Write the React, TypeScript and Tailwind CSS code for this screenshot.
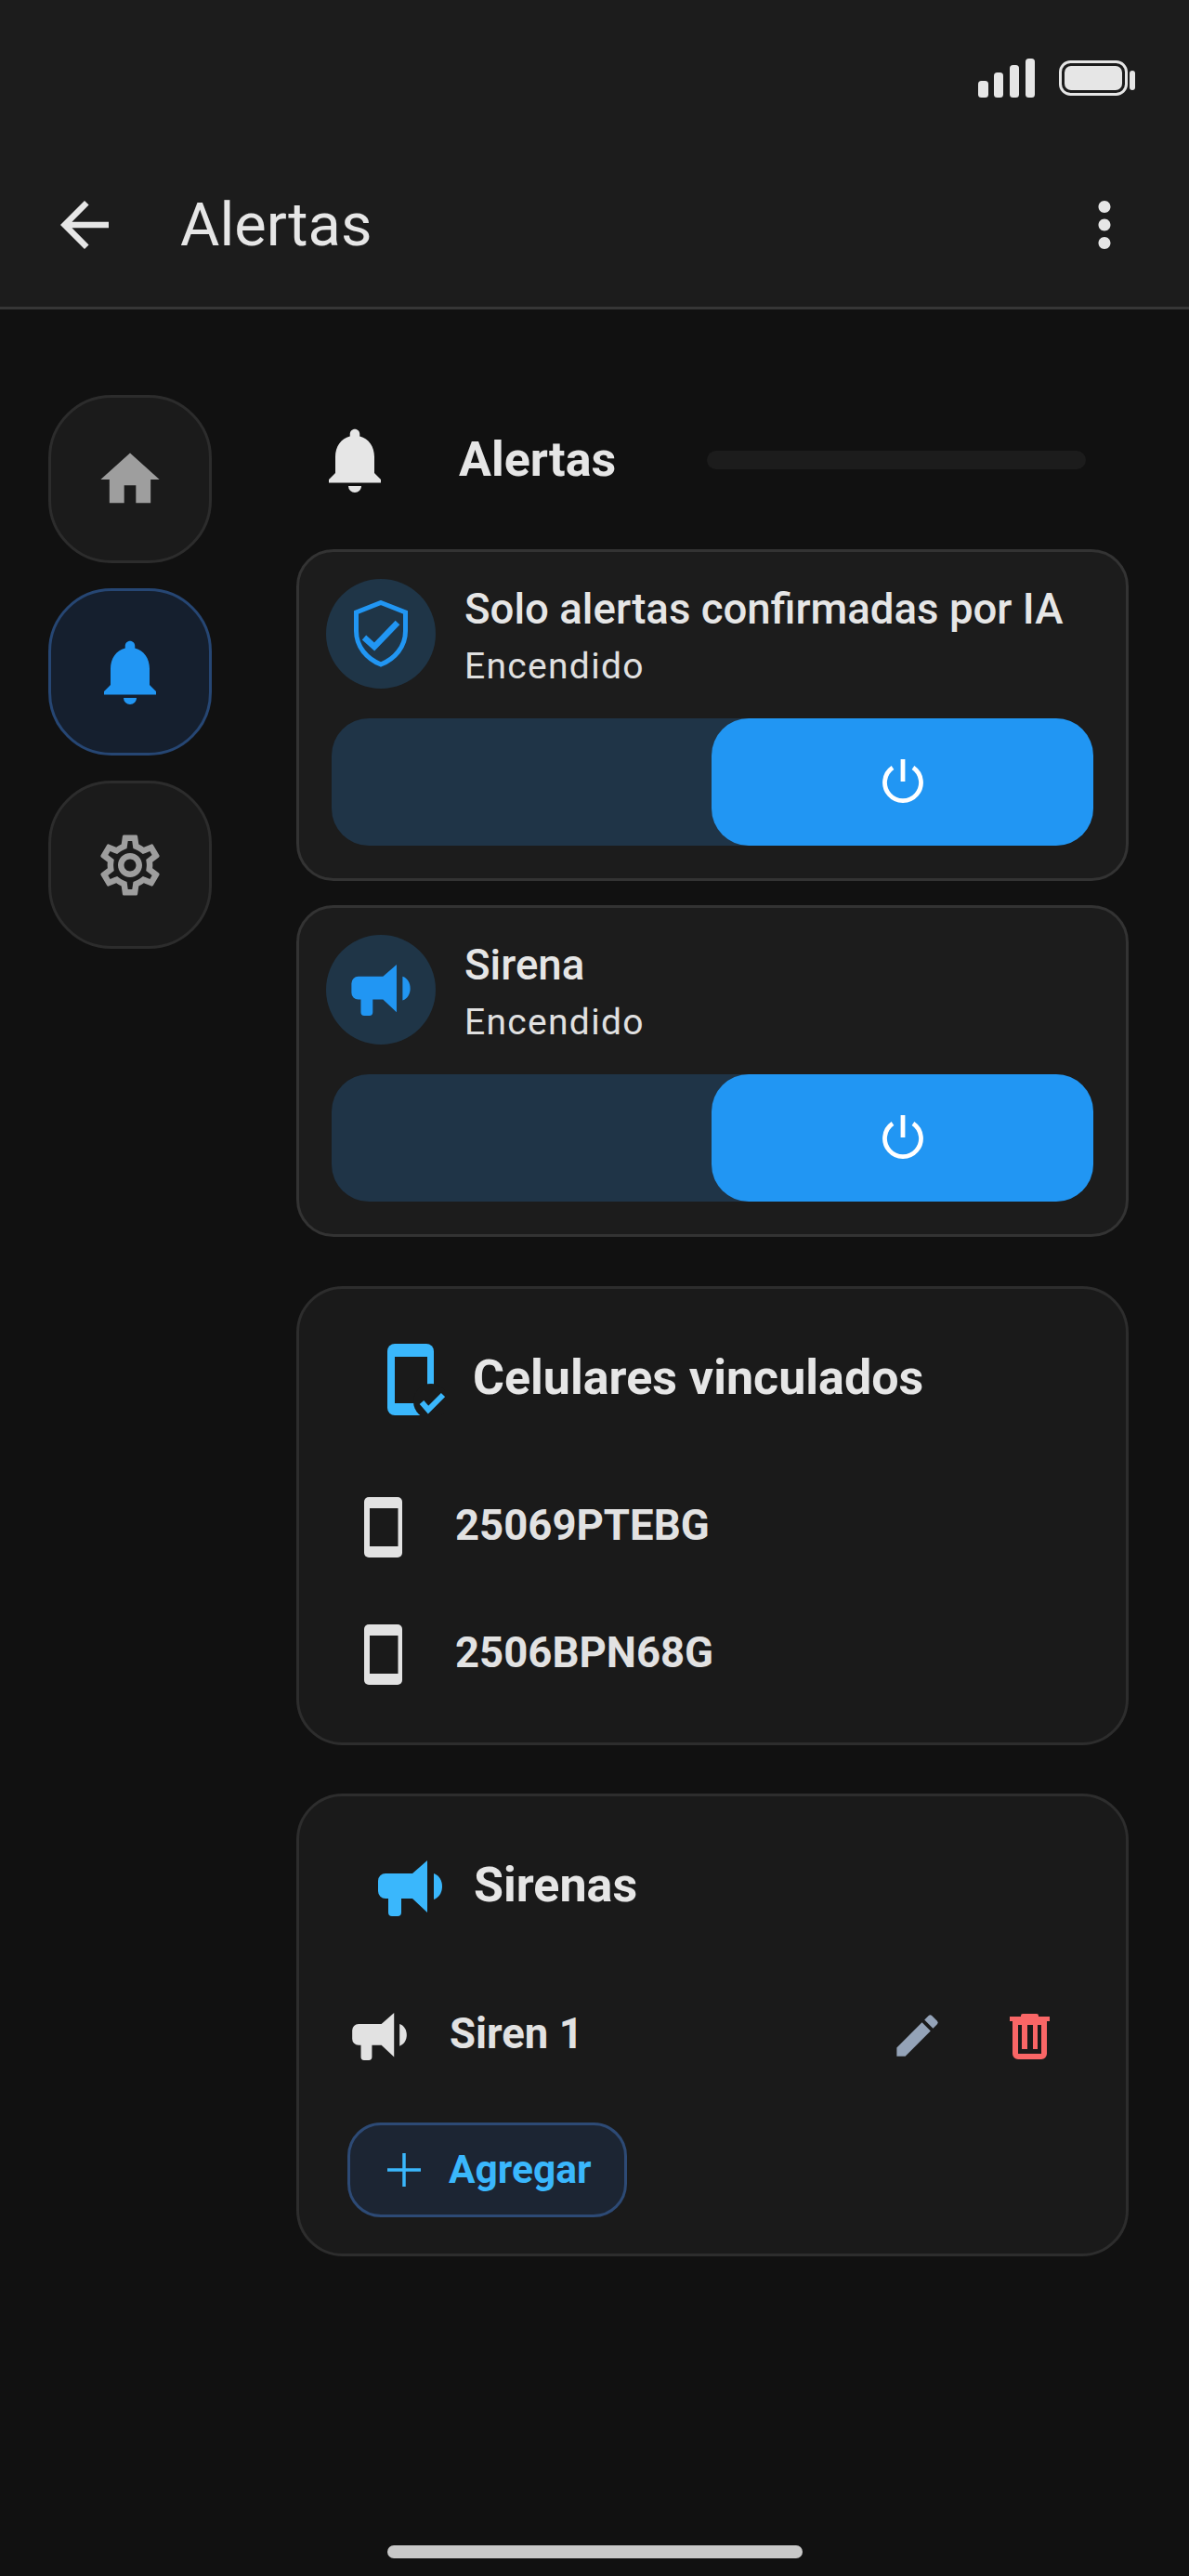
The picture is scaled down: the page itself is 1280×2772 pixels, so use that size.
import { MdArrowBack, MdEdit, MdHome, MdMoreVert, MdNotifications, MdOutlineSettings } from "react-icons/md";

function Megaphone({ className }: { className: string }) {
  return (
    <svg viewBox="0 0 69 60" className={className} fill="currentColor">
      <path d="M8 14H37L53 0V56L37 41H25V56a4 4 0 0 1-4 4H15a4 4 0 0 1-4-4V41H8a8 8 0 0 1-8-8V22a8 8 0 0 1 8-8Z" />
      <path d="M60 14C66 16 69 22 69 28C69 34 66 40 60 42Z" />
    </svg>
  );
}

function Power() {
  return (
    <svg viewBox="0 0 44 47" className="mb-[3px] h-[47px] w-[44px]" fill="none" stroke="white" strokeWidth="4.8">
      <path d="M22 0V24" />
      <path d="M11 9A19.5 19.5 0 1 0 33 9" />
    </svg>
  );
}

function Shield() {
  return (
    <svg viewBox="0 0 58 72" className="h-[72px] w-[58px]" fill="none" stroke="#2196f3">
      <path strokeWidth="5" d="M29 2.5L55.5 13V33C55.5 50 44 63 29 69C14 63 2.5 50 2.5 33V13Z" />
      <path strokeWidth="6.5" d="M11 40L22 50L47 24" />
    </svg>
  );
}

function LinkedPhone() {
  return (
    <svg viewBox="0 0 62 77" className="h-[77px] w-[62px]">
      <rect x="0" y="0" width="50" height="77" rx="8" fill="#3ab7fc" />
      <rect x="8" y="14" width="35" height="50" fill="#1a1a1a" />
      <circle cx="47" cy="62" r="19" fill="#1a1a1a" />
      <path d="M37 63L44 71L60 55" fill="none" stroke="#3ab7fc" strokeWidth="6" />
    </svg>
  );
}

function RowPhone() {
  return (
    <svg viewBox="0 0 41 65" className="h-[65px] w-[41px] shrink-0">
      <rect x="0" y="0" width="41" height="65" rx="5" fill="#e2e2e2" />
      <rect x="6" y="12" width="30.5" height="41" fill="#1a1a1a" />
    </svg>
  );
}

function Trash() {
  return (
    <svg viewBox="0 0 43 49" className="h-[49px] w-[43px]" fill="#f96666">
      <path d="M14 0H29a2 2 0 0 1 2 2V3H43V8H0V3H12V2a2 2 0 0 1 2-2Z" />
      <path d="M3 8H40V43a6 6 0 0 1-6 6H9a6 6 0 0 1-6-6ZM9 12V43H34V12Z" fillRule="evenodd" />
      <rect x="13" y="12" width="6" height="26" />
      <rect x="25" y="12" width="5" height="26" />
    </svg>
  );
}

function StatusIcons() {
  return (
    <div className="flex items-start justify-end pr-[58px] pt-[63px]">
      <svg viewBox="0 0 62 42" className="h-[42px] w-[62px]" fill="#e6e6e6">
        <rect x="0" y="24" width="11" height="18" rx="3.5" />
        <rect x="17" y="15" width="10" height="27" rx="3.5" />
        <rect x="34" y="7" width="10" height="35" rx="3.5" />
        <rect x="51" y="0" width="10" height="42" rx="3.5" />
      </svg>
      <svg viewBox="0 0 82 38" className="ml-[25px] mt-[2px] h-[38px] w-[82px]" fill="#e6e6e6">
        <rect x="1.5" y="1.5" width="71" height="35" rx="11" fill="none" stroke="#e6e6e6" strokeWidth="3" />
        <rect x="6" y="6" width="62" height="26" rx="7" />
        <rect x="76" y="11" width="6" height="21" rx="3" />
      </svg>
    </div>
  );
}

function SideButton({ active, children }: { active?: boolean; children: React.ReactNode }) {
  return (
    <div
      className={
        active
          ? "flex h-[180px] w-[176px] items-center justify-center rounded-[68px] border-[3px] border-[#264673] bg-[#151f2e] text-[#2196f3]"
          : "flex h-[181px] w-[176px] items-center justify-center rounded-[68px] border-[3px] border-[#2c2c2c] bg-[#1b1b1b] text-[#9e9e9e]"
      }
    >
      {children}
    </div>
  );
}

function ToggleCard({ title, icon }: { title: string; icon: React.ReactNode }) {
  return (
    <div className="rounded-[40px] border-[3px] border-[#333333] bg-[#1c1c1c] px-[29px] pb-[35px] pt-[29px]">
      <div className="flex items-start">
        <div className="flex h-[118px] w-[118px] shrink-0 items-center justify-center rounded-full bg-[#1f3547]">{icon}</div>
        <div className="ml-[31px] flex flex-col pt-[6px]">
          <span className="text-[45.6px] font-medium leading-[54px] text-[#e6e6e6]">{title}</span>
          <span className="mt-[10px] text-[39px] leading-[48px] tracking-[1.3px] text-[#e0e0e0]">Encendido</span>
        </div>
      </div>
      <div className="ml-[6px] mr-[6px] mt-[32px] flex h-[137px] justify-end rounded-[40px] bg-[#1f3447]">
        <div className="flex w-[411px] items-center justify-center rounded-[40px] bg-[#2196f3]">
          <Power />
        </div>
      </div>
    </div>
  );
}

export default function App() {
  return (
    <div className="flex h-[2772px] flex-col bg-[#111111] font-['Roboto',sans-serif]">
      <header className="h-[333px] shrink-0 border-b-[3px] border-[#363636] bg-[#1c1c1c]">
        <StatusIcons />
        <div className="mt-[98px] flex items-center justify-between pl-[52px] pr-[52px]">
          <div className="flex items-center">
            <MdArrowBack className="h-[78px] w-[78px] text-[#e6e6e6]" />
            <h1 className="ml-[64px] text-[65px] font-normal leading-[78px] text-[#e6e6e6]">Alertas</h1>
          </div>
          <MdMoreVert className="h-[78px] w-[78px] text-[#e6e6e6]" />
        </div>
      </header>

      <div className="flex flex-1 pl-[52px]">
        <nav className="mt-[92px] flex w-[176px] shrink-0 flex-col gap-[27px]">
          <SideButton>
            <MdHome className="h-[76px] w-[76px]" />
          </SideButton>
          <SideButton active>
            <MdNotifications className="h-[84px] w-[84px]" />
          </SideButton>
          <SideButton>
            <MdOutlineSettings className="h-[78px] w-[78px]" />
          </SideButton>
        </nav>

        <main className="ml-[91px] w-[896px] shrink-0 pt-[127px]">
          <div className="flex h-[70px] items-center">
            <MdNotifications className="ml-[21px] h-[84px] w-[84px] shrink-0 text-[#e6e6e6]" />
            <h2 className="ml-[70px] w-[267px] text-[52px] font-bold leading-[60px] text-[#e6e6e6]">Alertas</h2>
            <div className="h-[20px] w-[408px] rounded-[10px] bg-[#1c1c1c]" />
          </div>

          <div className="mt-[61px] flex flex-col gap-[26px]">
            <ToggleCard title="Solo alertas confirmadas por IA" icon={<Shield />} />
            <ToggleCard title="Sirena" icon={<Megaphone className="h-[55px] w-[64px] text-[#2196f3]" />} />
          </div>

          <section className="mt-[53px] rounded-[50px] border-[3px] border-[#2d2d2d] bg-[#1a1a1a] pb-[62px] pt-[59px]">
            <div className="flex items-center pl-[95px]">
              <LinkedPhone />
              <h3 className="ml-[30px] pb-[4px] text-[52px] font-bold leading-[60px] text-[#e6e6e6]">Celulares vinculados</h3>
            </div>
            <div className="mt-[88px] flex flex-col gap-[72px] pl-[70px]">
              <div className="flex items-center">
                <RowPhone />
                <span className="ml-[57px] pb-[4px] text-[45.5px] font-bold leading-[54px] text-[#e2e2e2]">25069PTEBG</span>
              </div>
              <div className="flex items-center">
                <RowPhone />
                <span className="ml-[57px] pb-[4px] text-[45.5px] font-bold leading-[54px] text-[#e2e2e2]">2506BPN68G</span>
              </div>
            </div>
          </section>

          <section className="mt-[52px] rounded-[50px] border-[3px] border-[#2d2d2d] bg-[#1a1a1a] pb-[39px] pt-[69px]">
            <div className="flex h-[60px] items-center pl-[85px]">
              <Megaphone className="h-[60px] w-[69px] text-[#3ab7fc]" />
              <h3 className="ml-[34px] pb-[6px] text-[52px] font-bold leading-[60px] text-[#e6e6e6]">Sirenas</h3>
            </div>
            <div className="mt-[104px] flex h-[51px] items-center pl-[57px]">
              <Megaphone className="h-[51px] w-[59px] text-[#e2e2e2]" />
              <span className="ml-[46px] pb-[6px] text-[45.5px] font-bold leading-[54px] text-[#e2e2e2]">Siren 1</span>
              <div className="ml-auto flex items-center pr-[82px]">
                <MdEdit className="mb-[3px] h-[59px] w-[59px] text-[#94a3b8]" />
                <div className="ml-[70px]">
                  <Trash />
                </div>
              </div>
            </div>
            <div className="ml-[52px] mt-[67px] flex h-[102px] w-[301px] items-center rounded-[36px] border-[3px] border-[#2d4a75] bg-[#1c2533] pl-[40px]">
              <svg viewBox="0 0 36 36" className="h-[36px] w-[36px]" fill="none" stroke="#3ab7fc" strokeWidth="3.5">
                <path d="M18 0V36M0 18H36" />
              </svg>
              <span className="ml-[30px] text-[42.5px] font-bold leading-[50px] text-[#3ab7fc]">Agregar</span>
            </div>
          </section>
        </main>
      </div>

      <div className="mb-[19px] flex justify-center">
        <div className="h-[14px] w-[447px] rounded-full bg-[#c8c8c8]" />
      </div>
    </div>
  );
}
